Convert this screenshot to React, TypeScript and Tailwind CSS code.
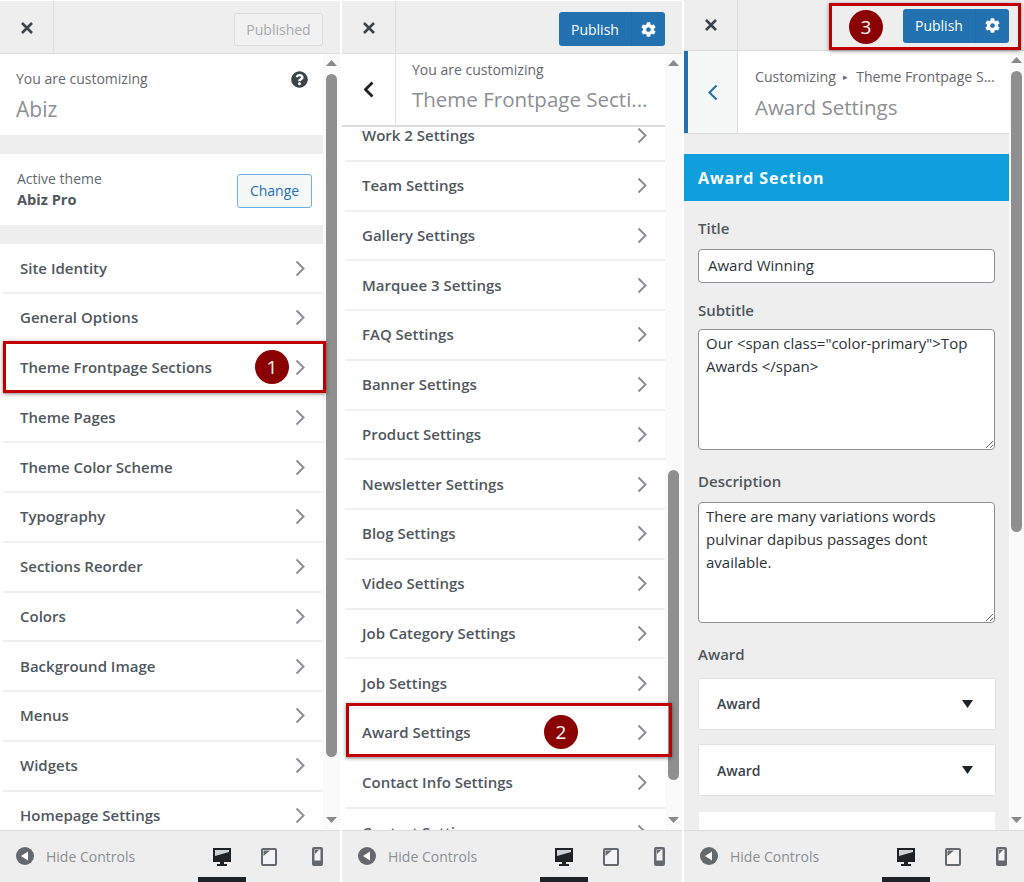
import React from "react";
import { FaCog, FaQuestionCircle } from "react-icons/fa";

const Chevron = ({ color = "#8c8f94" }: { color?: string }) => (
  <svg width="10" height="17" viewBox="0 0 10 17" fill="none" stroke={color} strokeWidth="2">
    <path d="M1.5 1.5 L8.5 8.5 L1.5 15.5" />
  </svg>
);

const CloseBtn = ({ cls }: { cls: string }) => (
  <div className={`w-[54px] h-full flex items-center justify-center border-r border-[#dcdcdc] ${cls}`}>
    <svg width="14" height="14" viewBox="0 0 14 14" stroke="#3c434a" strokeWidth="2.6">
      <path d="M2 2 L12 12 M12 2 L2 12" />
    </svg>
  </div>
);

const PublishBtn = ({ cls }: { cls: string }) => (
  <div className={`w-[106px] h-[34px] bg-[#2271b1] rounded-[3px] flex items-center text-white text-[14px] ${cls}`}>
    <span className="pl-[12px] w-[72px]">Publish</span>
    <span className="flex-1 flex items-center justify-center border-l border-[#206ca9] h-full">
      <FaCog size={15} color="#ffffff" />
    </span>
  </div>
);

const Row = ({ label }: { label: string }) => (
  <div className="h-[49.75px] shrink-0 ml-[3px] border-b-2 border-[#f0f0f0] flex items-center justify-between pl-[17px] pr-[18px]">
    <span className="text-[15px] font-semibold text-[#50575e] leading-none">{label}</span>
    <Chevron />
  </div>
);

const Scrollbar = ({ top, thumb, w }: { top: string; thumb: string; w: string }) => (
  <div className={`${w} shrink-0 bg-[#fafafa] flex flex-col items-center`}>
    <div className={`${top} w-full flex justify-center`}>
      <svg width="11" height="6" viewBox="0 0 11 6" className="mt-[6px]">
        <path d="M5.5 0 L11 6 L0 6 Z" fill="#8a8a8a" />
      </svg>
    </div>
    <div className={`w-[11px] rounded-[6px] bg-[#8f8f8f] ${thumb}`} />
    <div className="flex-1" />
    <svg width="11" height="6" viewBox="0 0 11 6" className="mb-[7px]">
      <path d="M0 0 L11 0 L5.5 6 Z" fill="#8a8a8a" />
    </svg>
  </div>
);

const Footer = () => (
  <div className="h-[52px] shrink-0 bg-[#eeeeee] border-t border-[#dcdcdc] flex items-center relative">
    <svg width="18" height="18" viewBox="0 0 18 18" className="ml-[16px] -mt-[1px]">
      <circle cx="9" cy="9" r="9" fill="#646970" />
      <path d="M12 4.5 V13.5 L5 9 Z" fill="#ffffff" />
    </svg>
    <span className="ml-[12px] text-[14px] text-[#8a8f94] -mt-[1px]">Hide Controls</span>
    <div className="flex-1" />
    <div className="w-[48px] flex justify-center pl-[1px]">
      <svg width="20" height="20" viewBox="0 0 20 20">
        <path d="M1 1 H19 V15 H1 Z" fill="#1d2327" />
        <path d="M3 3 H17 V5 L3 9 Z" fill="#cfd2d4" />
        <path d="M8 15 H12 V17 H15 V19 H5 V17 H8 Z" fill="#1d2327" />
      </svg>
    </div>
    <div className="w-[48px] flex justify-center">
      <svg width="16" height="18" viewBox="0 0 16 18">
        <rect x="1" y="1" width="14" height="16" rx="1" fill="#f4f4f4" stroke="#646970" strokeWidth="2" />
        <path d="M2.5 2.5 H9 L2.5 8 Z" fill="#646970" />
      </svg>
    </div>
    <div className="w-[48px] flex justify-center -mr-[1px]">
      <svg width="11" height="19" viewBox="0 0 11 19">
        <rect x="0" y="0" width="11" height="19" rx="2" fill="#646970" />
        <rect x="2.5" y="2.5" width="6" height="11" fill="#f4f4f4" />
        <path d="M3 3 H7 L3 7 Z" fill="#646970" />
      </svg>
    </div>
    <div className="absolute left-[198px] bottom-0 w-[48px] h-[5px] bg-[#1d2327]" />
  </div>
);

const Highlight = ({ cls }: { cls: string }) => (
  <div className={`absolute border-[3px] border-[#c00000] shadow-[0_1px_4px_rgba(0,0,0,0.45)] pointer-events-none ${cls}`} />
);

const Badge = ({ n, cls }: { n: number; cls: string }) => (
  <div className={`absolute w-[34px] h-[34px] rounded-full bg-[#8b0000] text-white text-[19px] flex items-center justify-center ${cls}`}>{n}</div>
);

const Caret = () => (
  <svg width="11" height="8" viewBox="0 0 11 8">
    <path d="M0 0 H11 L5.5 8 Z" fill="#1d2327" />
  </svg>
);

const Repeater = ({ label }: { label?: string }) => (
  <div className="h-[50px] shrink-0 ml-[15px] mr-[14px] bg-white shadow-[0_0_2px_rgba(0,0,0,0.15)] flex items-center justify-between pl-[18px] pr-[22px] mb-[16.5px]">
    <span className="text-[14px] font-semibold text-[#3c434a]">{label}</span>
    <Caret />
  </div>
);

const firstRows = ["Site Identity", "General Options", "Theme Frontpage Sections", "Theme Pages", "Theme Color Scheme", "Typography", "Sections Reorder", "Colors", "Background Image", "Menus", "Widgets", "Homepage Settings"];
const secondRows = ["Work 2 Settings", "Team Settings", "Gallery Settings", "Marquee 3 Settings", "FAQ Settings", "Banner Settings", "Product Settings", "Newsletter Settings", "Blog Settings", "Video Settings", "Job Category Settings", "Job Settings", "Award Settings", "Contact Info Settings", "Contact Settings"];

export default function App() {
  return (
    <div className="relative w-[1024px] h-[882px] bg-white overflow-hidden flex gap-[2px] font-['Open_Sans',sans-serif]">
      {/* Panel 1 */}
      <div className="w-[340px] h-full flex flex-col pt-[1px]">
        <div className="h-[53px] shrink-0 bg-[#eeeeee] border-b border-[#dcdcdc] flex items-center justify-between pr-[17px]">
          <CloseBtn cls="pt-[1px]" />
          <div className="w-[89px] h-[33px] mt-[4px] border border-[#dcdcde] bg-[#f1f1f1] rounded-[3px] flex items-center justify-center text-[14px] text-[#a7aaad]">Published</div>
        </div>
        <div className="flex-1 min-h-0 flex">
          <div className="flex-1 min-w-0 flex flex-col overflow-hidden">
            <div className="h-[81px] shrink-0 px-[16px] pt-[15px] relative">
              <div className="text-[14px] leading-[20px] text-[#646970]">You are customizing</div>
              <div className="text-[21px] leading-[28px] mt-[6px] text-[#8c8f94]">Abiz</div>
              <FaQuestionCircle size={17} color="#3c434a" className="absolute right-[15px] top-[17px]" />
            </div>
            <div className="h-[19px] shrink-0 bg-[#eeeeee]" />
            <div className="h-[71px] shrink-0 pl-[17px] pr-[11px] flex items-center justify-between">
              <div className="flex flex-col -mt-[2px]">
                <span className="text-[14px] leading-[20px] text-[#646970]">Active theme</span>
                <span className="text-[14.6px] leading-[20px] font-bold text-[#50575e]">Abiz Pro</span>
              </div>
              <div className="w-[75px] h-[34px] mt-[2px] border border-[#72aee6] bg-[#f6f7f7] rounded-[3px] flex items-center justify-center text-[14px] text-[#2271b1]">Change</div>
            </div>
            <div className="h-[19px] shrink-0 bg-[#eeeeee]" />
            <div className="mt-[0.3px] flex flex-col">
              {firstRows.map((r) => <Row key={r} label={r} />)}
            </div>
          </div>
          <Scrollbar w="w-[17px]" top="h-[20px]" thumb="h-[683px]" />
        </div>
        <Footer />
      </div>

      {/* Panel 2 */}
      <div className="w-[340px] h-full flex flex-col pt-[1px]">
        <div className="h-[53px] shrink-0 bg-[#eeeeee] border-b border-[#dcdcdc] flex items-center justify-between pr-[17px]">
          <CloseBtn cls="pt-[1px]" />
          <PublishBtn cls="mt-[4px]" />
        </div>
        <div className="flex-1 min-h-0 flex">
          <div className="flex-1 min-w-0 flex flex-col overflow-hidden">
            <div className="h-[73px] shrink-0 flex border-b-2 border-[#dcdcdc] bg-white relative z-10">
              <div className="w-[54px] shrink-0 border-r border-[#e2e2e2] flex items-center justify-center">
                <svg width="10" height="17" viewBox="0 0 10 17" fill="none" stroke="#1d2327" strokeWidth="2.8">
                  <path d="M8.5 1.5 L1.5 8.5 L8.5 15.5" />
                </svg>
              </div>
              <div className="pl-[16px] pt-[6px] min-w-0">
                <div className="text-[14px] leading-[20px] text-[#646970]">You are customizing</div>
                <div className="text-[20.5px] leading-[28px] mt-[5px] text-[#8c8f94] whitespace-nowrap">Theme Frontpage Secti...</div>
              </div>
            </div>
            <div className="-mt-[15px] flex flex-col">
              {secondRows.map((r) => <Row key={r} label={r} />)}
            </div>
          </div>
          <Scrollbar w="w-[17px]" top="h-[20px] mb-[396px]" thumb="h-[310px]" />
        </div>
        <Footer />
      </div>

      {/* Panel 3 */}
      <div className="w-[340px] h-full flex flex-col">
        <div className="h-[51px] shrink-0 bg-[#eeeeee] border-b border-[#dcdcdc] flex items-center justify-between pr-[15px]">
          <CloseBtn cls="" />
          <PublishBtn cls="mt-[1px]" />
        </div>
        <div className="flex-1 min-h-0 flex">
          <div className="flex-1 min-w-0 flex flex-col overflow-hidden bg-[#eeeeee]">
            <div className="h-[83px] shrink-0 flex bg-white border-b border-[#dcdcdc]">
              <div className="w-[54px] shrink-0 border-l-4 border-l-[#2271b1] border-r border-r-[#dcdcdc] bg-[#f6f7f7] flex items-center justify-center">
                <svg width="10" height="17" viewBox="0 0 10 17" fill="none" stroke="#2271b1" strokeWidth="2.2">
                  <path d="M8.5 1.5 L1.5 8.5 L8.5 15.5" />
                </svg>
              </div>
              <div className="pl-[17px] pt-[16px] min-w-0">
                <div className="text-[14.1px] leading-[20px] text-[#646970] whitespace-nowrap">Customizing <span className="text-[9px] align-[2px] mx-[4px]">▸</span> Theme Frontpage S...</div>
                <div className="text-[20.5px] leading-[28px] mt-[6px] text-[#8c8f94]">Award Settings</div>
              </div>
            </div>
            <div className="h-[47px] shrink-0 mt-[20px] bg-[#0f9fdc] flex items-center pl-[14px] text-[16px] font-bold tracking-[0.9px] text-white">Award Section</div>
            <div className="px-[14px] flex flex-col text-[#50575e]">
              <label className="text-[15px] font-semibold leading-[20px] mt-[17px]">Title</label>
              <input readOnly defaultValue="Award Winning" className="h-[34px] mt-[11px] w-full bg-white border border-[#8c8f94] rounded-[4px] px-[9px] pb-[2px] text-[15px] text-[#2c3338] outline-none" />
              <label className="text-[15px] font-semibold leading-[20px] mt-[17px]">Subtitle</label>
              <textarea readOnly defaultValue={'Our <span class="color-primary">Top Awards </span>'} className="h-[121px] mt-[9px] w-full bg-white border border-[#8c8f94] rounded-[4px] px-[7px] py-[2px] text-[15px] leading-[23px] text-[#2c3338] outline-none" />
              <label className="text-[15px] font-semibold leading-[20px] mt-[21px]">Description</label>
              <textarea readOnly defaultValue="There are many variations words pulvinar dapibus passages dont available." className="h-[121px] mt-[11px] w-full bg-white border border-[#8c8f94] rounded-[4px] px-[7px] py-[2px] text-[15px] leading-[23px] text-[#2c3338] outline-none" />
              <label className="text-[15px] font-semibold leading-[20px] mt-[21px] mb-[14.5px]">Award</label>
            </div>
            <Repeater label="Award" />
            <Repeater label="Award" />
            <div className="h-[50px] shrink-0 ml-[15px] mr-[14px] bg-white" />
          </div>
          <Scrollbar w="w-[15px]" top="h-[20px]" thumb="h-[461px]" />
        </div>
        <Footer />
      </div>

      {/* Annotations */}
      <Highlight cls="left-[3px] top-[341px] w-[323px] h-[52px]" />
      <Badge n={1} cls="left-[255px] top-[350px]" />
      <Highlight cls="left-[346px] top-[703px] w-[326px] h-[54px]" />
      <Badge n={2} cls="left-[544px] top-[715px]" />
      <Highlight cls="left-[829px] top-[3px] w-[192px] h-[47px]" />
      <Badge n={3} cls="left-[849px] top-[10px]" />
    </div>
  );
}
